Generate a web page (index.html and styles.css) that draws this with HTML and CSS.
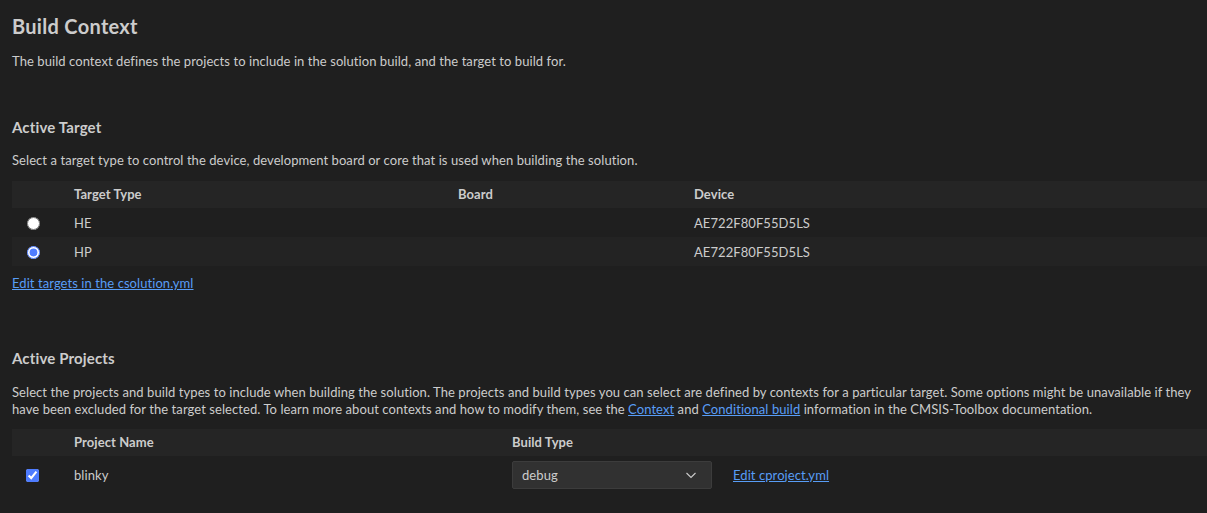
FILE: index.html
```html
<!DOCTYPE html>
<html lang="en">
<head>
<meta charset="utf-8">
<title>Build Context</title>
<link rel="stylesheet" href="styles.css">
</head>
<body>
<main class="page">
  <h1 class="title">Build Context</h1>
  <p class="intro">The build context defines the projects to include in the solution build, and the target to build for.</p>

  <section class="section section-target">
    <h2 class="section-title">Active Target</h2>
    <p class="section-desc">Select a target type to control the device, development board or core that is used when building the solution.</p>
    <table class="grid grid-target">
      <colgroup>
        <col class="c-sel"><col class="c-type"><col class="c-board"><col class="c-device">
      </colgroup>
      <thead>
        <tr><th></th><th>Target Type</th><th>Board</th><th>Device</th></tr>
      </thead>
      <tbody>
        <tr><td class="sel"><input type="radio" name="target" class="radio"></td><td>HE</td><td></td><td>AE722F80F55D5LS</td></tr>
        <tr class="alt"><td class="sel"><input type="radio" name="target" class="radio" checked></td><td>HP</td><td></td><td>AE722F80F55D5LS</td></tr>
      </tbody>
    </table>
    <a class="link edit-link" href="#">Edit targets in the csolution.yml</a>
  </section>

  <section class="section section-projects">
    <h2 class="section-title">Active Projects</h2>
    <p class="section-desc">Select the projects and build types to include when building the solution. The projects and build types you can select are defined by contexts for a particular target. Some options might be unavailable if they<br>have been excluded for the target selected. To learn more about contexts and how to modify them, see the <a class="link" href="#">Context</a> and <a class="link" href="#">Conditional build</a> information in the CMSIS-Toolbox documentation.</p>
    <table class="grid grid-projects">
      <colgroup>
        <col class="c-sel"><col class="c-name"><col class="c-build">
      </colgroup>
      <thead>
        <tr><th></th><th>Project Name</th><th>Build Type</th></tr>
      </thead>
      <tbody>
        <tr class="proj-row">
          <td class="sel"><input type="checkbox" class="check" checked></td>
          <td>blinky</td>
          <td>
            <div class="build-cell">
              <div class="dropdown">
                <span class="dropdown-value">debug</span>
                <svg class="chevron" width="16" height="16" viewBox="0 0 16 16"><path d="M3.5 6 L8 10.5 L12.5 6" fill="none" stroke="#cccccc" stroke-width="1.1"/></svg>
              </div>
              <a class="link" href="#">Edit cproject.yml</a>
            </div>
          </td>
        </tr>
      </tbody>
    </table>
  </section>
</main>
</body>
</html>
```

FILE: styles.css
```css
html, body {
  margin: 0;
  padding: 0;
  background: #1f1f1f;
}

body {
  color: #cccccc;
  font-family: "Lato", "Liberation Sans", sans-serif;
  font-size: 13px;
  letter-spacing: 0.07px;
}

.page {
  padding: 12px 0 0 12px;
}

.title {
  margin: 0;
  font-size: 20px;
  line-height: 28px;
  font-weight: 700;
  color: #cccccc;
  letter-spacing: 0.3px;
}

.intro {
  margin: 13px 0 0;
  line-height: 17px;
}

.section-title {
  margin: 0;
  font-size: 15px;
  line-height: 20px;
  font-weight: 700;
  color: #cccccc;
  letter-spacing: 0.15px;
}

.section-target .section-title {
  margin-top: 47px;
}

.section-projects .section-title {
  margin-top: 56px;
}

.section-desc {
  margin: 15px 0 0;
  line-height: 17px;
}

.section-projects .section-desc {
  margin-top: 16px;
}

.grid {
  width: 100%;
  border-collapse: collapse;
  table-layout: fixed;
  margin-top: 12px;
}

.grid-projects {
  margin-top: 11px;
}

.c-sel { width: 50px; }
.c-type { width: 384px; }
.c-board { width: 236px; }
.c-name { width: 438px; }

.grid th {
  background: #252525;
  text-align: left;
  font-weight: 700;
  height: 27px;
  padding: 0 0 0 12px;
  line-height: 17px;
}

.grid td {
  padding: 1px 0 0 12px;
  height: 28px;
  line-height: 17px;
}

.grid tr.alt td {
  background: #232323;
}

.grid td.sel {
  padding-left: 15px;
}

.radio, .check {
  margin: 0;
  width: 13px;
  height: 13px;
  accent-color: #4e7cff;
  display: block;
}

.grid-projects td.sel {
  padding-left: 14px;
}

.proj-row td {
  height: 36px;
}

.build-cell {
  display: flex;
  align-items: center;
  gap: 21px;
}

.dropdown {
  box-sizing: border-box;
  width: 200px;
  height: 28px;
  background: #313131;
  border: 1px solid #3c3c3c;
  border-radius: 2px;
  display: flex;
  align-items: center;
  justify-content: space-between;
  padding: 0 12px 0 9px;
}

.chevron {
  display: block;
}

.link {
  color: #589df6;
  text-decoration: underline;
}

.edit-link {
  display: block;
  margin-top: 9px;
  line-height: 17px;
  width: max-content;
}
```
